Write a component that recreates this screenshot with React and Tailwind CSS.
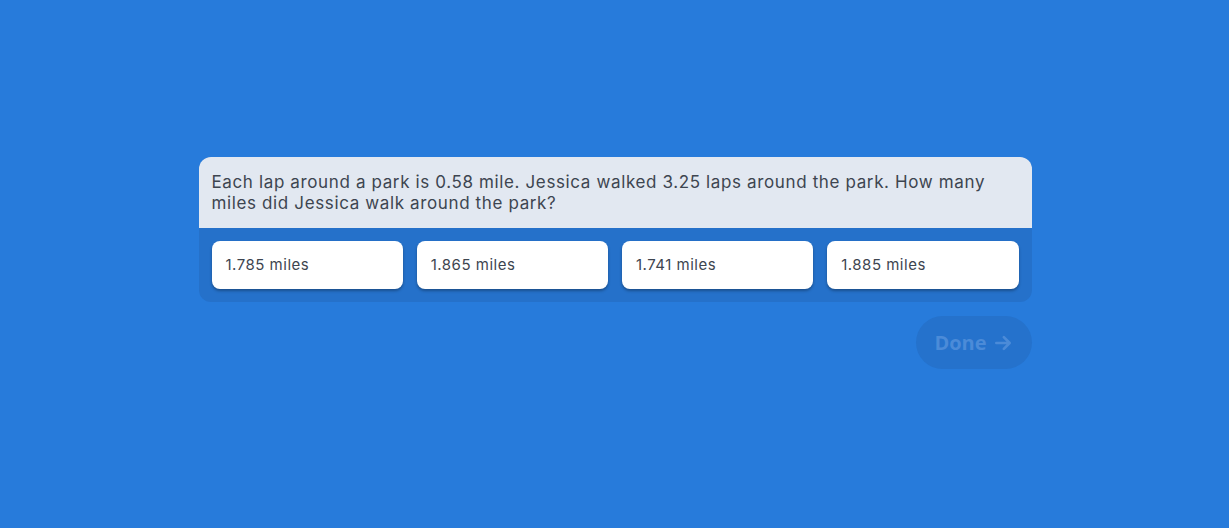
const OPTIONS = ['1.785 miles', '1.865 miles', '1.741 miles', '1.885 miles']

export default function App() {
  return (
    <div className="w-full h-[528px] bg-[#277bdb] flex flex-col items-center pt-[157px]">
      <div className="w-[833px] ml-px">
        <div className="rounded-[12px] overflow-hidden bg-[#2571ca]">
          <div className="bg-[#e2e8f1] px-[13px] pt-[15px] pb-[14px] text-[17px] leading-[21px] text-[#3d4550] font-['Inter','Noto_Sans',sans-serif] tracking-[0.63px]">
            Each lap around a park is 0.58 mile. Jessica walked 3.25 laps around the park. How many miles did Jessica walk around the park?
          </div>
          <div className="grid grid-cols-4 gap-[14px] p-[13px]">
            {OPTIONS.map(o => (
              <button
                key={o}
                className="h-[48px] bg-white rounded-[8px] text-left pl-[14px] text-[15px] tracking-[0.5px] text-[#3d4550] font-['Inter','Noto_Sans',sans-serif] shadow-[0_2px_3px_rgba(0,0,0,0.3)]"
              >
                {o}
              </button>
            ))}
          </div>
        </div>
        <div className="flex justify-end mt-[14px]">
          <button className="h-[53px] w-[116px] rounded-full bg-[#2572cc] text-[#4b8bd8] font-['Open_Sans',sans-serif] font-bold text-[20px] flex items-center justify-center gap-[6px]">
            Done
            <svg width="20" height="20" viewBox="0 0 24 24" fill="none" stroke="currentColor" strokeWidth="3.2" strokeLinecap="round" strokeLinejoin="round">
              <path d="M4 12h15M13 5l7 7-7 7" />
            </svg>
          </button>
        </div>
      </div>
    </div>
  )
}
